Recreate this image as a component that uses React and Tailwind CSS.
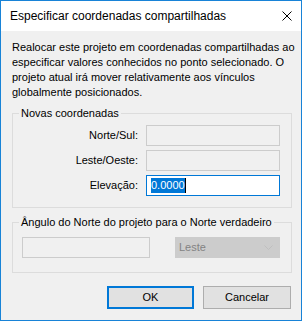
import React from 'react';

const DisabledBox = ({ className = '' }) => (
  <div className={`h-[21px] border border-[#cccccc] bg-[#f0f0f0] ${className}`} />
);

const Row = ({ label, children }) => (
  <div className="flex items-center justify-end gap-[8px] pr-[11px]">
    <span className="leading-[15px]">{label}</span>
    {children}
  </div>
);

export default function App() {
  return (
    <div className="w-[302px] h-[321px] border border-[#1883d7] bg-[#f0f0f0] flex flex-col font-['Liberation_Sans',Arial,sans-serif] text-[11px] text-black">
      <div className="h-[30px] shrink-0 bg-white flex items-center justify-between pl-[9px]">
        <span className="text-[12px] leading-[16px]">Especificar coordenadas compartilhadas</span>
        <svg width="10" height="10" viewBox="0 0 10 10" className="mr-[9px]">
          <path d="M0.5 0.5 L9.5 9.5 M9.5 0.5 L0.5 9.5" stroke="#000" strokeWidth="1" fill="none" />
        </svg>
      </div>

      <div className="flex-1 flex flex-col pl-[11px] pr-[9px] pt-[9px]">
        <p className="leading-[15px] whitespace-nowrap">
          Realocar este projeto em coordenadas compartilhadas ao
          <br />
          especificar valores conhecidos no ponto selecionado. O
          <br />
          projeto atual irá mover relativamente aos vínculos
          <br />
          globalmente posicionados.
        </p>

        <fieldset className="mt-[6px] border border-[#dcdcdc] px-0 pb-[11px]">
          <legend className="ml-[6px] px-[2px] leading-[15px]">Novas coordenadas</legend>
          <div className="flex flex-col gap-[4px] pt-[4px]">
            <Row label="Norte/Sul:">
              <DisabledBox className="w-[134px]" />
            </Row>
            <Row label="Leste/Oeste:">
              <DisabledBox className="w-[134px]" />
            </Row>
            <Row label="Elevação:">
              <div className="w-[134px] h-[21px] border border-[#0078d7] bg-white flex items-center pl-[4px]">
                <span className="bg-[#0078d7] text-white leading-[15px]">0.0000</span>
                <span className="w-px h-[15px] bg-black" />
              </div>
            </Row>
          </div>
        </fieldset>

        <fieldset className="mt-[7px] border border-[#dcdcdc] px-0 pb-[14px]">
          <legend className="ml-[6px] px-[2px] leading-[15px]">Ângulo do Norte do projeto para o Norte verdadeiro</legend>
          <div className="flex items-center justify-between pl-[9px] pr-[11px] pt-[7px]">
            <DisabledBox className="w-[128px]" />
            <div className="w-[105px] h-[21px] border border-[#cccccc] bg-[#cccccc] flex items-center justify-between pl-[3px] pr-[6px] text-[#838383]">
              <span className="leading-[15px]">Leste</span>
              <svg width="9" height="5" viewBox="0 0 9 5">
                <path d="M0.5 0.5 L4.5 4.5 L8.5 0.5" stroke="#bfbfbf" strokeWidth="1" fill="none" />
              </svg>
            </div>
          </div>
        </fieldset>

        <div className="mt-[13px] flex justify-end gap-[9px] pr-[1px]">
          <button className="w-[87px] h-[23px] bg-[#e1e1e1] border-2 border-[#0078d7] leading-[15px]">OK</button>
          <button className="w-[88px] h-[23px] bg-[#e1e1e1] border border-[#adadad] leading-[15px]">Cancelar</button>
        </div>
      </div>
    </div>
  );
}
